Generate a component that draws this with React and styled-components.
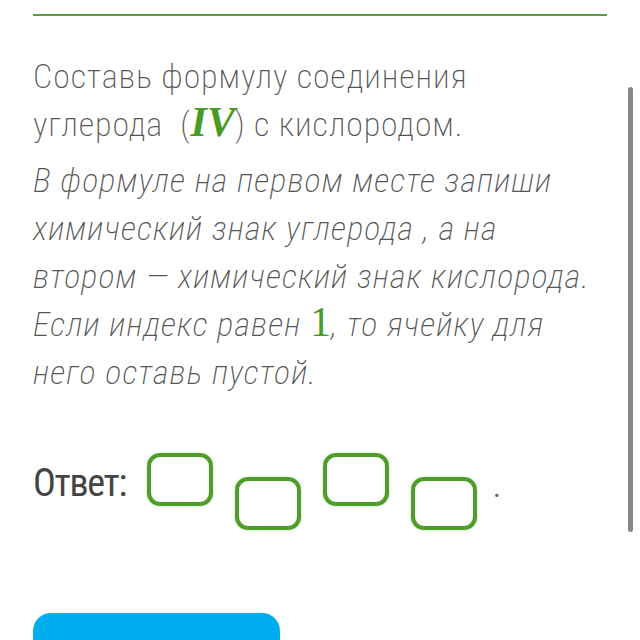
import React from "react";
import styled, { createGlobalStyle } from "styled-components";

const GlobalStyle = createGlobalStyle`
  html, body {
    margin: 0;
    padding: 0;
    background: #ffffff;
    overflow: hidden;
  }
  body {
    font-family: Roboto, "Noto Sans", sans-serif;
  }
`;

const Screen = styled.div`
  position: relative;
  width: 640px;
  height: 640px;
  overflow: hidden;
  background: #fff;
`;

const Page = styled.div`
  padding: 14px 33px 0 33px;
  display: flex;
  flex-direction: column;
`;

const Rule = styled.div`
  height: 2px;
  background: #5d9e3b;
`;

const Question = styled.div`
  margin-top: 36px;
  color: #555555;
  font-size: 34px;
  line-height: 48px;
  font-weight: 200;
  font-stretch: 87.5%;
  white-space: nowrap;
`;

const Para = styled.p`
  margin: ${({ $gap }) => ($gap ? "8px 0 0" : "0")};
  font-style: ${({ $italic }) => ($italic ? "italic" : "normal")};
  letter-spacing: ${({ $italic }) => ($italic ? "1.1px" : "0.9px")};
`;

const Roman = styled.span`
  font-family: "Liberation Serif", "Times New Roman", serif;
  font-style: italic;
  font-weight: 700;
  font-size: 42px;
  line-height: 1;
  color: #4a9a26;
  letter-spacing: 0;
`;

const Digit = styled.span`
  font-family: "Liberation Serif", "Times New Roman", serif;
  font-style: normal;
  font-size: 42px;
  line-height: 1;
  color: #4a9a26;
  letter-spacing: 0;
`;

const AnswerRow = styled.div`
  margin-top: 57px;
  display: flex;
  align-items: flex-start;
`;

const Label = styled.div`
  margin-top: 10px;
  margin-right: 21px;
  font-size: 38px;
  line-height: 40px;
  font-weight: 400;
  font-stretch: 87.5%;
  letter-spacing: -1.3px;
  color: #444444;
`;

const Cell = styled.div`
  box-sizing: border-box;
  width: 66px;
  height: 53px;
  margin-top: ${({ $low }) => ($low ? "24px" : "0")};
  margin-right: ${({ $last }) => ($last ? "16px" : "22px")};
  border: 4px solid #4f9e2a;
  border-radius: 13px;
  box-shadow: 0 0 3px rgba(79, 158, 42, 0.35);
  background: #fff;
`;

const Dot = styled.div`
  margin-top: 14px;
  font-size: 30px;
  line-height: 40px;
  color: #666;
`;

const Submit = styled.button`
  margin-top: 83px;
  width: 247px;
  height: 62px;
  border: none;
  border-radius: 18px;
  background: #00aeef;
  color: #fff;
  font-family: Roboto, sans-serif;
  font-size: 30px;
  padding-top: 30px;
`;

const Scrollbar = styled.div`
  position: absolute;
  right: 7px;
  top: 87px;
  width: 5px;
  height: 445px;
  border-radius: 3px;
  background: #888888;
`;

export default function App() {
  return (
    <Screen>
      <GlobalStyle />
      <Page>
        <Rule />
        <Question>
          <Para>
            Составь формулу соединения
            <br />
            углерода&nbsp; (<Roman>IV</Roman>) с кислородом.
          </Para>
          <Para $italic $gap>
            В формуле на первом месте запиши
            <br />
            химический знак углерода , а на
            <br />
            втором — химический знак кислорода.
            <br />
            Если индекс равен <Digit>1</Digit>, то ячейку для
            <br />
            него оставь пустой.
          </Para>
        </Question>
        <AnswerRow>
          <Label>Ответ:</Label>
          <Cell />
          <Cell $low />
          <Cell />
          <Cell $low $last />
          <Dot>.</Dot>
        </AnswerRow>
        <div>
          <Submit>Ответить</Submit>
        </div>
      </Page>
      <Scrollbar />
    </Screen>
  );
}
